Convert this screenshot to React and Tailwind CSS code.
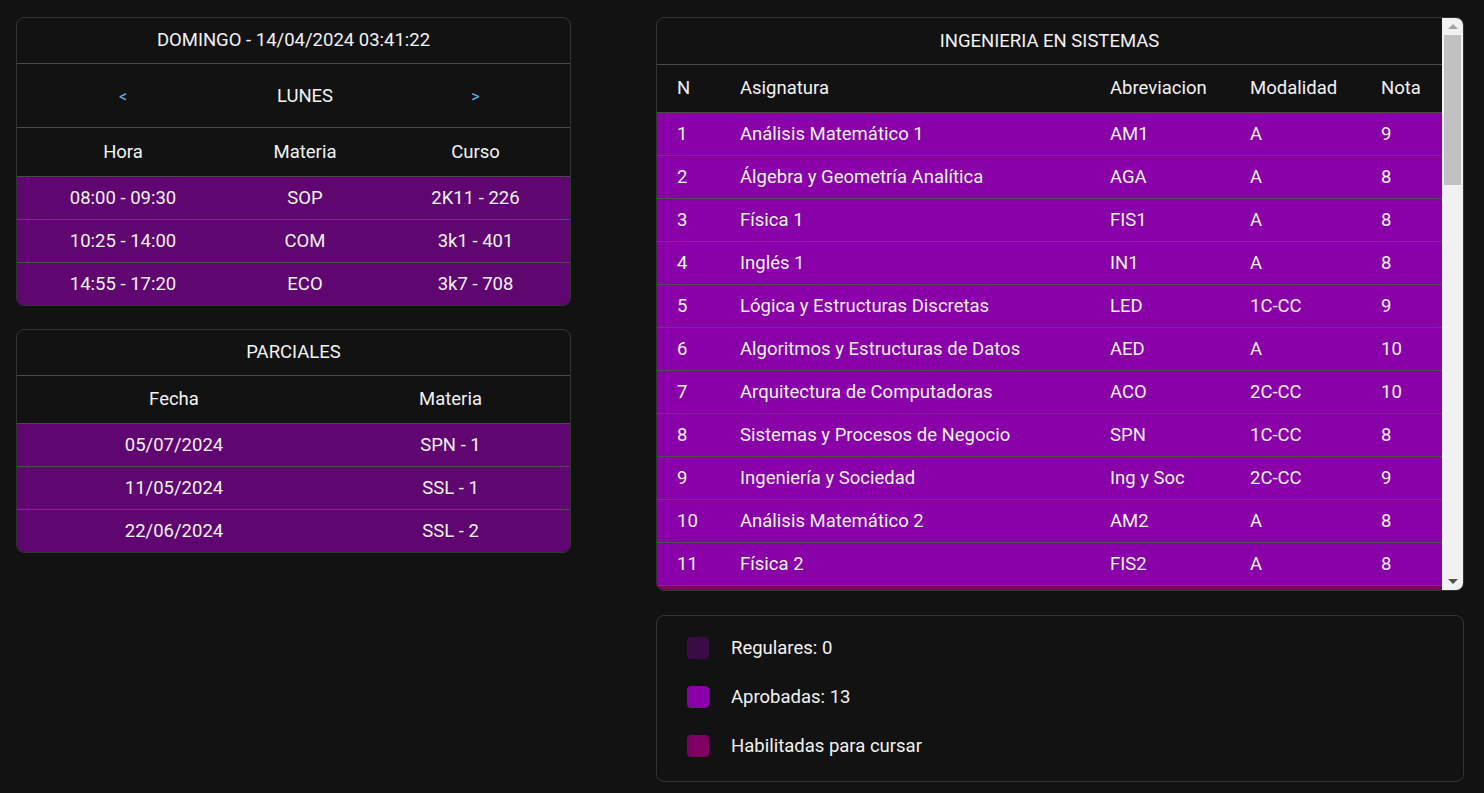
import React from 'react';

const horario = [
  ['08:00 - 09:30', 'SOP', '2K11 - 226'],
  ['10:25 - 14:00', 'COM', '3k1 - 401'],
  ['14:55 - 17:20', 'ECO', '3k7 - 708'],
];

const parciales = [
  ['05/07/2024', 'SPN - 1'],
  ['11/05/2024', 'SSL - 1'],
  ['22/06/2024', 'SSL - 2'],
];

const materias = [
  [1, 'Análisis Matemático 1', 'AM1', 'A', 9],
  [2, 'Álgebra y Geometría Analítica', 'AGA', 'A', 8],
  [3, 'Física 1', 'FIS1', 'A', 8],
  [4, 'Inglés 1', 'IN1', 'A', 8],
  [5, 'Lógica y Estructuras Discretas', 'LED', '1C-CC', 9],
  [6, 'Algoritmos y Estructuras de Datos', 'AED', 'A', 10],
  [7, 'Arquitectura de Computadoras', 'ACO', '2C-CC', 10],
  [8, 'Sistemas y Procesos de Negocio', 'SPN', '1C-CC', 8],
  [9, 'Ingeniería y Sociedad', 'Ing y Soc', '2C-CC', 9],
  [10, 'Análisis Matemático 2', 'AM2', 'A', 8],
  [11, 'Física 2', 'FIS2', 'A', 8],
];

const HorarioCard = () => (
  <div className="rounded-lg border border-[#333] overflow-hidden">
    <div className="h-[46px] flex items-center justify-center border-b border-[#4a4a4a]">
      DOMINGO - 14/04/2024 03:41:22
    </div>
    <div className="h-[64px] grid grid-cols-[212px_152px_1fr] items-center text-center border-b border-[#4a4a4a]">
      <span className="text-[#64b5f6] text-[16px] pt-[2px]">&lt;</span>
      <span className="pt-[2px]">LUNES</span>
      <span className="text-[#64b5f6] text-[16px] pt-[2px]">&gt;</span>
    </div>
    <div className="h-[49px] grid grid-cols-[212px_152px_1fr] items-center text-center border-b border-[#4a4a4a]">
      <span>Hora</span>
      <span>Materia</span>
      <span>Curso</span>
    </div>
    {horario.map((r, i) => (
      <div
        key={i}
        className={`grid grid-cols-[212px_152px_1fr] items-center text-center bg-[#600670] ${i < horario.length - 1 ? 'h-[43px] border-b border-[#4f4f4f]' : 'h-[42px]'}`}
      >
        {r.map((c, j) => <span key={j}>{c}</span>)}
      </div>
    ))}
  </div>
);

const ParcialesCard = () => (
  <div className="rounded-lg border border-[#333] overflow-hidden">
    <div className="h-[46px] flex items-center justify-center border-b border-[#4a4a4a]">PARCIALES</div>
    <div className="h-[48px] grid grid-cols-[314px_1fr] items-center text-center border-b border-[#4a4a4a]">
      <span>Fecha</span>
      <span>Materia</span>
    </div>
    {parciales.map((r, i) => (
      <div
        key={i}
        className={`grid grid-cols-[314px_1fr] items-center text-center bg-[#600670] ${i < parciales.length - 1 ? 'h-[43px] border-b border-[#4f4f4f]' : 'h-[42px]'}`}
      >
        <span>{r[0]}</span>
        <span>{r[1]}</span>
      </div>
    ))}
  </div>
);

const Scrollbar = () => (
  <div className="w-[21px] bg-[#f1f1f1] flex flex-col items-center shrink-0">
    <div className="h-[17px] w-full flex items-center justify-center">
      <div className="w-0 h-0 border-l-[5px] border-r-[5px] border-b-[5px] border-l-transparent border-r-transparent border-b-[#a3a3a3]" />
    </div>
    <div className="h-[150px] w-[17px] bg-[#c1c1c1]" />
    <div className="flex-1" />
    <div className="h-[17px] w-full flex items-center justify-center">
      <div className="w-0 h-0 border-l-[5px] border-r-[5px] border-t-[5px] border-l-transparent border-r-transparent border-t-[#505050]" />
    </div>
  </div>
);

const cols = 'grid grid-cols-[63px_370px_140px_131px_1fr] items-center';

const MateriasCard = () => (
  <div className="h-[574px] rounded-lg border border-[#333] overflow-hidden flex">
    <div className="flex-1 overflow-hidden">
      <div className="h-[47px] flex items-center justify-center border-b border-[#4a4a4a]">INGENIERIA EN SISTEMAS</div>
      <div className={`${cols} h-[48px] border-b border-[#4a4a4a]`}>
        {['N', 'Asignatura', 'Abreviacion', 'Modalidad', 'Nota'].map((h) => (
          <span key={h} className="pl-[20px]">{h}</span>
        ))}
      </div>
      {materias.map((m) => (
        <div key={m[0]} className={`${cols} h-[43px] border-b border-[#4f4f4f] bg-[#8900a8]`}>
          {m.map((c, j) => <span key={j} className="pl-[20px] whitespace-nowrap">{c}</span>)}
        </div>
      ))}
      <div className="h-[43px] bg-[#800062]" />
    </div>
    <Scrollbar />
  </div>
);

const legend = [
  ['bg-[#3a0c46]', 'Regulares: 0'],
  ['bg-[#8900a8]', 'Aprobadas: 13'],
  ['bg-[#800062]', 'Habilitadas para cursar'],
];

const LegendCard = () => (
  <div className="rounded-lg border border-[#333] pl-[30px] pt-[21px] pb-[24px] flex flex-col gap-[27px]">
    {legend.map(([c, t]) => (
      <div key={t} className="flex items-center gap-[22px] h-[22px]">
        <div className={`w-[22px] h-[22px] rounded-[4px] ${c}`} />
        <span>{t}</span>
      </div>
    ))}
  </div>
);

export default function App() {
  return (
    <div
      className="min-h-screen bg-[#121212] text-[#f2f2f2] text-[18.5px] leading-none pt-[17px] pl-[16px] flex gap-[85px]"
      style={{ fontFamily: 'Roboto, "Liberation Sans", sans-serif' }}
    >
      <div className="w-[555px] flex flex-col gap-[23px]">
        <HorarioCard />
        <ParcialesCard />
      </div>
      <div className="w-[808px] flex flex-col gap-[24px]">
        <MateriasCard />
        <LegendCard />
      </div>
    </div>
  );
}
